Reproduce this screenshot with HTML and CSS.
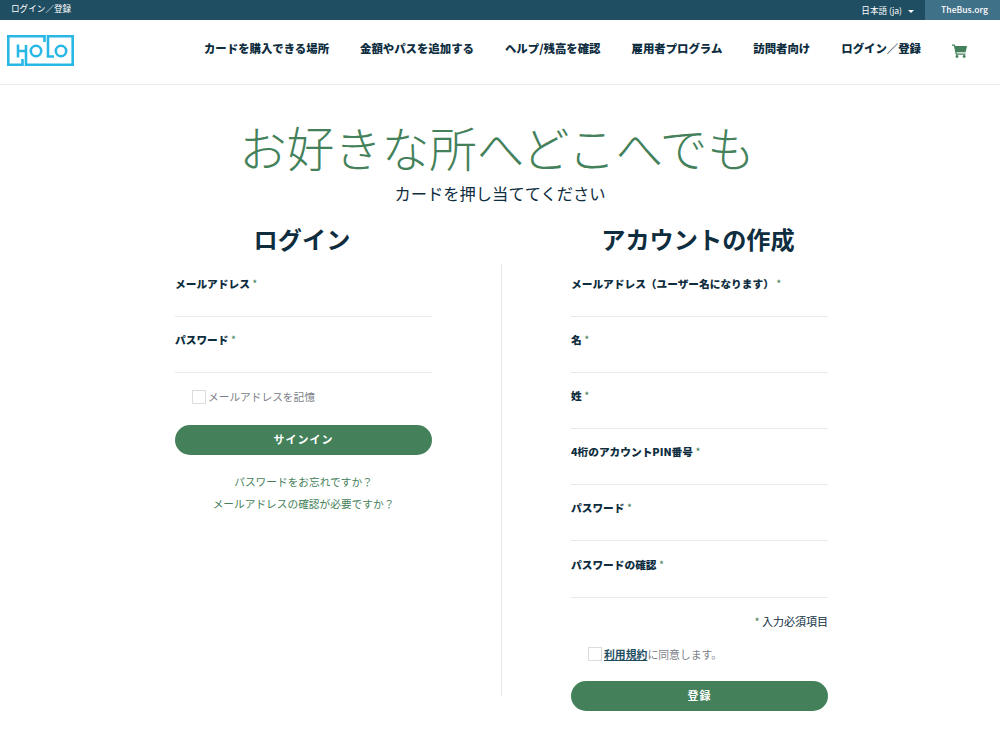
FILE: index.html
```html
<!DOCTYPE html>
<html lang="ja">
<head>
<meta charset="utf-8">
<title>HOLO</title>
<link rel="stylesheet" href="styles.css">
</head>
<body>
<div class="topbar">
  <a class="top-login">ログイン／登録</a>
  <div class="top-right">
    <span class="lang">日本語 (ja)<i class="caret"></i></span>
    <span class="thebus">TheBus.org</span>
  </div>
</div>
<header class="header">
  <svg class="logo" width="67" height="31" viewBox="0 0 67 31" fill="none" stroke="#29b7e5" stroke-width="2.6">
    <path d="M15.5 24V29.7H1.3V1.3H37.5V7"/>
    <path d="M19 10V29.7H65.7V1.3H41V21.5H47"/>
    <path d="M11 9.5V22.5M11 16H19"/>
    <circle cx="29" cy="16" r="5.2"/>
    <circle cx="54" cy="16" r="5.2"/>
  </svg>
  <nav class="nav">
    <a>カードを購入できる場所</a>
    <a>金額やパスを追加する</a>
    <a>ヘルプ/残高を確認</a>
    <a>雇用者プログラム</a>
    <a>訪問者向け</a>
    <a>ログイン／登録</a>
    <svg class="cart" width="15" height="14" viewBox="0 0 15 14"><path fill="#44815a" d="M0 0.5H2.8L3.2 2H15L13.6 8.2H4.6L4.9 9.6H13.5V10.8H3.8L1.9 1.7H0Z"/><circle fill="#44815a" cx="5" cy="12.5" r="1.4"/><circle fill="#44815a" cx="12.2" cy="12.5" r="1.4"/></svg>
  </nav>
</header>
<main class="main">
  <h1 class="hero">お好きな所へどこへでも</h1>
  <p class="sub">カードを押し当ててください</p>
  <div class="cols">
    <h2 class="title title-left">ログイン</h2>
    <h2 class="title title-right">アカウントの作成</h2>
    <section class="panel panel-left">
      <form class="form">
        <div class="field"><label>メールアドレス <em>*</em></label></div>
        <div class="field"><label>パスワード <em>*</em></label></div>
        <div class="check"><span class="box"></span><span>メールアドレスを記憶</span></div>
        <button class="btn" type="button">サインイン</button>
        <p class="links"><a>パスワードをお忘れですか？</a><a>メールアドレスの確認が必要ですか？</a></p>
      </form>
    </section>
    <section class="panel panel-right">
      <form class="form">
        <div class="field"><label>メールアドレス（ユーザー名になります） <em>*</em></label></div>
        <div class="field"><label>名 <em>*</em></label></div>
        <div class="field"><label>姓 <em>*</em></label></div>
        <div class="field"><label>4桁のアカウントPIN番号 <em>*</em></label></div>
        <div class="field"><label>パスワード <em>*</em></label></div>
        <div class="field"><label>パスワードの確認 <em>*</em></label></div>
        <p class="req"><em>*</em> 入力必須項目</p>
        <div class="check check-terms"><span class="box"></span><span><a class="terms">利用規約</a>に同意します。</span></div>
        <button class="btn" type="button">登録</button>
      </form>
    </section>
  </div>
</main>
</body>
</html>
```
FILE: styles.css
```css
* { box-sizing: border-box; }
html, body { margin: 0; height: 740px; overflow: hidden; }
body { font-family: "Noto Sans CJK JP", "Noto Sans", "Liberation Sans", sans-serif; color: #0e2d3e; background: #fff; }
.topbar { height: 20px; background: #1f4e63; color: #fff; display: flex; justify-content: space-between; font-size: 8.6px; line-height: 16px; }
.top-login { padding-left: 11px; }
.top-right { display: flex; line-height: 19px; }
.lang { display: flex; align-items: center; height: 20px; padding-right: 11px; }
.caret { display: inline-block; width: 0; height: 0; margin-left: 6px; margin-top: 2px; border: 3px solid transparent; border-top-color: #fff; border-bottom: 0; }
.thebus { width: 75px; height: 20px; padding-left: 4px; background: #3f7189; text-align: center; font-weight: 500; }
.header { height: 65px; border-bottom: 1px solid #e9e9e9; display: flex; align-items: flex-start; justify-content: space-between; padding: 15px 33px 0 7px; }
.logo { display: block; }
.nav { display: flex; gap: 31px; font-size: 11.4px; font-weight: 900; line-height: 18px; padding-top: 4px; }
.nav .cart { margin-top: 5px; }
.main { display: flex; flex-direction: column; align-items: center; }
.hero { margin: 29px 6px 0 0; font-size: 47.5px; line-height: 66px; font-weight: 300; color: #44815a; }
.sub { margin: 1px 0 0; font-size: 16.3px; line-height: 24px; font-weight: 400; color: #0e2d3e; }
.cols { display: grid; grid-template-columns: 501px 499px; width: 1000px; margin-top: 16px; }
.title { margin: 0; font-size: 24.2px; line-height: 36px; font-weight: 700; color: #0e2d3e; text-align: center; }
.title-left { padding-left: 103px; }
.title-right { padding-right: 105px; }
.panel { height: 432px; margin-top: 7px; }
.panel-left { padding-left: 175px; }
.panel-right { border-left: 1px solid #e9e9e9; padding-left: 69px; }
.form { width: 257px; }
.field { height: 56px; border-bottom: 1px solid #e9e9e9; padding-top: 14px; font-size: 10.7px; font-weight: 900; line-height: 18px; }
.field:first-child { height: 53px; padding-top: 11px; }
.field:nth-child(6) { height: 57px; padding-top: 15px; }
.field em, .req em { color: #44815a; font-style: normal; font-weight: 400; }
.check { display: flex; align-items: center; gap: 2px; margin: 16px 0 0 17px; font-size: 10.7px; line-height: 16px; color: #7c7f88; }
.box { width: 14px; height: 14px; border: 1px solid #dcdcdc; background: #fff; }
.btn { display: block; width: 257px; height: 30px; margin-top: 20px; padding: 0 0 2px; border: 0; border-radius: 15px; background: #44815a; color: #fff; font: 700 11px/28px "Noto Sans CJK JP", sans-serif; letter-spacing: 1px; }
.links { margin: 18px 0 0; display: flex; flex-direction: column; align-items: center; gap: 4px; font-size: 10.7px; line-height: 18px; color: #44815a; }
.req { margin: 15px 0 0; text-align: right; font-size: 11px; line-height: 16px; color: #0e2d3e; }
.check-terms { margin-top: 17px; font-size: 10.85px; }
.check-terms + .btn { margin-top: 19px; }
.terms { color: #1f4e63; font-weight: 700; text-decoration: underline; }
```
